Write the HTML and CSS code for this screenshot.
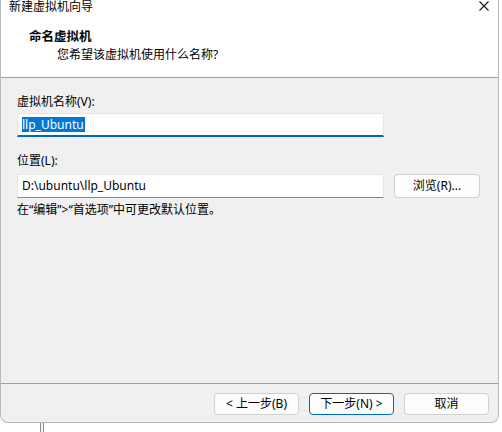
FILE: index.html
```html
<!DOCTYPE html>
<html lang="zh-CN">
<head>
    <meta charset="UTF-8">
    <title>新建虚拟机向导</title>
    <link rel="stylesheet" href="styles.css">
</head>
<body>
    <div class="wizard">
        <!-- Title bar -->
        <div class="titlebar">
            <span class="title">新建虚拟机向导</span>
            <svg class="close" width="10" height="10" viewBox="0 0 10 10">
                <path d="M0.5 0.5 L9.5 9.5 M9.5 0.5 L0.5 9.5" stroke="#1a1a1a" stroke-width="1.1" fill="none"/>
            </svg>
        </div>

        <!-- Header -->
        <div class="wizard-header">
            <h1>命名虚拟机</h1>
            <p>您希望该虚拟机使用什么名称?</p>
        </div>

        <!-- Body -->
        <div class="wizard-body">
            <label class="field-label">虚拟机名称(V):</label>
            <div class="field focused"><span class="selected">llp_Ubuntu</span></div>

            <label class="field-label second">位置(L):</label>
            <div class="field-row">
                <div class="field">D:\ubuntu\llp_Ubuntu</div>
                <button class="btn browse">浏览(R)...</button>
            </div>

            <p class="note">在“编辑”&gt;“首选项”中可更改默认位置。</p>
        </div>

        <!-- Footer -->
        <div class="wizard-footer">
            <button class="btn">&lt; 上一步(B)</button>
            <button class="btn primary">下一步(N) &gt;</button>
            <button class="btn">取消</button>
        </div>
    </div>
    <div class="behind"></div>
</body>
</html>
```

FILE: styles.css
```css
/* General Styles */
body {
    margin: 0;
    background: #ffffff;
    font-family: "Noto Sans", "Noto Sans CJK SC", sans-serif;
    font-size: 12px;
    color: #000;
}

.wizard {
    width: 497px;
    border: 1px solid #b9b9b9;
    border-top: none;
    border-radius: 0 0 8px 8px;
    background: #f0f0f0;
    overflow: hidden;
}

.titlebar {
    display: flex;
    justify-content: space-between;
    align-items: flex-start;
    height: 14px;
    padding-left: 8px;
    padding-right: 9px;
    background: #fff;
}

.title {
    line-height: 14px;
}

.close {
    margin-top: 1px;
}

.wizard-header {
    background: #fff;
    padding: 14px 0 13px 28px;
    border-bottom: 1px solid #a0a0a0;
}

.wizard-header h1 {
    margin: 0;
    font-size: 12.5px;
    font-weight: bold;
    line-height: 18px;
}

.wizard-header p {
    margin: 0 0 0 28px;
    line-height: 18px;
}

.wizard-body {
    height: 290px;
    padding: 15px 16px 0 16px;
}

.field-label {
    display: block;
    line-height: 18px;
}

.field-label.second {
    margin-top: 15px;
}

.field {
    box-sizing: border-box;
    width: 367px;
    height: 24px;
    margin-top: 2px;
    padding: 2px 4px 0;
    background: #fff;
    border: 1px solid #e6e6e6;
    border-bottom: 1px solid #868686;
    line-height: 18px;
}

.field.focused {
    border-bottom: 2px solid #0067c0;
    padding-top: 2px;
}

.selected {
    display: inline-block;
    background: #0078d7;
    color: #fff;
    line-height: 14px;
    padding: 1px 1px 0 0;
}

.field-row {
    display: flex;
    gap: 10px;
    margin-top: 4px;
}

.field-row .field {
    margin-top: 0;
}

.note {
    margin: 3px 0 0;
    line-height: 18px;
}

.wizard-footer {
    display: flex;
    justify-content: flex-end;
    gap: 10px;
    height: 29px;
    padding: 9px 9px 0 0;
    border-top: 1px solid #a0a0a0;
}

.btn {
    box-sizing: border-box;
    width: 85px;
    height: 22px;
    padding: 0;
    background: #fdfdfd;
    border: 1px solid #d0d0d0;
    border-radius: 4px;
    font-family: inherit;
    font-size: 12px;
    color: #000;
    line-height: 18px;
}

.btn.primary {
    border-color: #0067c0;
}

.btn.browse {
    width: 86px;
    height: 24px;
}

.behind {
    width: 2px;
    height: 9px;
    margin-left: 40px;
    border-left: 1px solid #8a8a8a;
    border-right: 1px solid #8a8a8a;
    background: #f4f4f4;
}
```
